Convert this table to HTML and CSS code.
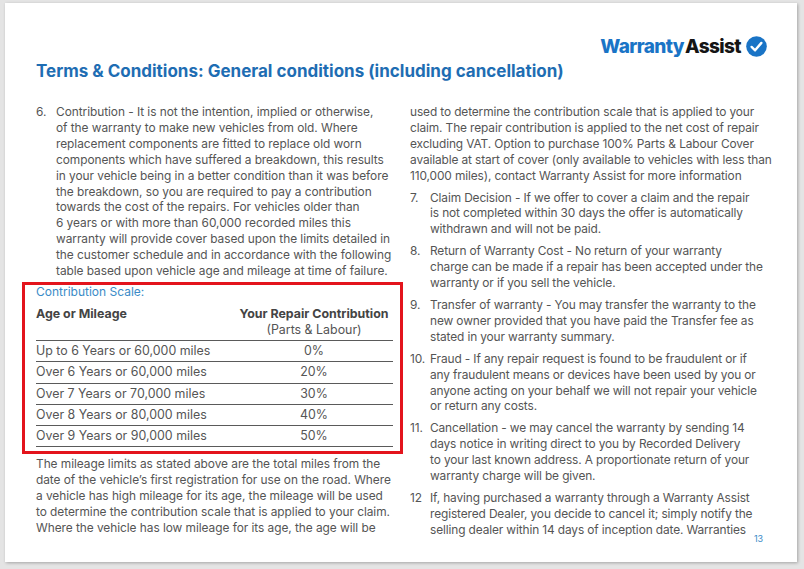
FILE: index.html
```html
<!DOCTYPE html>
<html lang="en">
<head>
<meta charset="utf-8">
<title>Terms &amp; Conditions</title>
<link rel="stylesheet" href="styles.css">
</head>
<body>
<div class="page">
  <header class="top">
    <div class="logo">
      <span class="logo-w">Warranty</span><span class="logo-a">Assist</span>
      <svg class="logo-check" width="21" height="21" viewBox="0 0 21 21" aria-hidden="true">
        <circle cx="10.5" cy="10.5" r="10.3" fill="#1a74c6"/>
        <path d="M5.6 10.9 L9.1 14.3 L15.4 6.9" fill="none" stroke="#fff" stroke-width="2.4" stroke-linecap="round" stroke-linejoin="round"/>
      </svg>
    </div>
  </header>
  <h1 class="title">Terms &amp; Conditions: General conditions (including cancellation)</h1>
  <div class="cols">
    <div class="col">
      <div class="item">
        <span class="num">6.</span>
        <span class="txt">Contribution - It is not the intention, implied or otherwise,<br>of the warranty to make new vehicles from old. Where<br>replacement components are fitted to replace old worn<br>components which have suffered a breakdown, this results<br>in your vehicle being in a better condition than it was before<br>the breakdown, so you are required to pay a contribution<br>towards the cost of the repairs. For vehicles older than<br>6 years or with more than 60,000 recorded miles this<br>warranty will provide cover based upon the limits detailed in<br>the customer schedule and in accordance with the following<br>table based upon vehicle age and mileage at time of failure.</span>
      </div>
      <div class="scale">
        <div class="scale-title">Contribution Scale:</div>
        <div class="scale-head">
          <span class="c1">Age or Mileage</span>
          <span class="c2"><b>Your Repair Contribution</b><br>(Parts &amp; Labour)</span>
        </div>
        <div class="scale-row"><span class="c1">Up to 6 Years or 60,000 miles</span><span class="c2">0%</span></div>
        <div class="scale-row"><span class="c1">Over 6 Years or 60,000 miles</span><span class="c2">20%</span></div>
        <div class="scale-row"><span class="c1">Over 7 Years or 70,000 miles</span><span class="c2">30%</span></div>
        <div class="scale-row"><span class="c1">Over 8 Years or 80,000 miles</span><span class="c2">40%</span></div>
        <div class="scale-row"><span class="c1">Over 9 Years or 90,000 miles</span><span class="c2">50%</span></div>
      </div>
      <p class="para">The mileage limits as stated above are the total miles from the<br>date of the vehicle’s first registration for use on the road. Where<br>a vehicle has high mileage for its age, the mileage will be used<br>to determine the contribution scale that is applied to your claim.<br>Where the vehicle has low mileage for its age, the age will be</p>
    </div>
    <div class="col col-right">
      <p class="para">used to determine the contribution scale that is applied to your<br>claim. The repair contribution is applied to the net cost of repair<br>excluding VAT. Option to purchase 100% Parts &amp; Labour Cover<br>available at start of cover (only available to vehicles with less than<br>110,000 miles), contact Warranty Assist for more information</p>
      <div class="item">
        <span class="num">7.</span>
        <span class="txt">Claim Decision - If we offer to cover a claim and the repair<br>is not completed within 30 days the offer is automatically<br>withdrawn and will not be paid.</span>
      </div>
      <div class="item">
        <span class="num">8.</span>
        <span class="txt">Return of Warranty Cost - No return of your warranty<br>charge can be made if a repair has been accepted under the<br>warranty or if you sell the vehicle.</span>
      </div>
      <div class="item">
        <span class="num">9.</span>
        <span class="txt">Transfer of warranty - You may transfer the warranty to the<br>new owner provided that you have paid the Transfer fee as<br>stated in your warranty summary.</span>
      </div>
      <div class="item">
        <span class="num">10.</span>
        <span class="txt">Fraud - If any repair request is found to be fraudulent or if<br>any fraudulent means or devices have been used by you or<br>anyone acting on your behalf we will not repair your vehicle<br>or return any costs.</span>
      </div>
      <div class="item">
        <span class="num">11.</span>
        <span class="txt">Cancellation - we may cancel the warranty by sending 14<br>days notice in writing direct to you by Recorded Delivery<br>to your last known address. A proportionate return of your<br>warranty charge will be given.</span>
      </div>
      <div class="item">
        <span class="num">12</span>
        <span class="txt">If, having purchased a warranty through a Warranty Assist<br>registered Dealer, you decide to cancel it; simply notify the<br>selling dealer within 14 days of inception date. Warranties</span>
      </div>
      <div class="folio">13</div>
    </div>
  </div>
</div>
</body>
</html>
```

FILE: styles.css
```css
html, body {
  margin: 0;
  padding: 0;
}
body {
  background: #e4e4e4;
  width: 804px;
  height: 569px;
  overflow: hidden;
  font-family: Inter, "Open Sans", sans-serif;
  color: #555555;
}
.page {
  width: 792px;
  height: 559px;
  margin: 3px 0 0 5px;
  background: #ffffff;
  box-shadow: 1px 1px 3px rgba(0, 0, 0, 0.28);
  box-sizing: border-box;
  padding: 0 30px 0 31px;
}
.top {
  display: flex;
  justify-content: flex-end;
  padding-top: 32px;
}
.logo {
  display: flex;
  align-items: center;
  height: 22px;
  font-family: Inter, sans-serif;
  font-weight: 800;
  font-size: 19px;
  letter-spacing: -0.6px;
}
.logo-w { color: #1a74c6; }
.logo-a { color: #151515; margin-left: 1px; }
.logo-check { margin-left: 5px; }
.title {
  margin: 4px 0 0;
  font-size: 17px;
  line-height: 20px;
  font-weight: 700;
  color: #1e6db3;
  letter-spacing: 0;
}
.cols {
  display: grid;
  grid-template-columns: 357px 357px;
  column-gap: 17px;
  margin-top: 23px;
  font-size: 11.9px;
  line-height: 15.9px;
  letter-spacing: -0.05px;
}
.col-right {
  letter-spacing: -0.12px;
}
.item {
  display: flex;
  margin-bottom: 6px;
}
.num {
  flex: 0 0 20px;
}
.txt {
  white-space: nowrap;
}
.para {
  margin: 0 0 6px;
  white-space: nowrap;
}
.scale {
  margin: -3px -10px 0 -14px;
  border: 3px solid #e3141c;
  padding: 0 7px 4px 11px;
  font-size: 12.4px;
  letter-spacing: 0;
}
.scale-title {
  color: #3a8bc7;
  font-size: 12px;
  line-height: 14px;
}
.scale-head {
  display: flex;
  padding: 7px 0 2px;
  border-bottom: 1px solid #5a5a5a;
  line-height: 16px;
}
.scale-head .c1 {
  font-weight: 700;
  color: #444;
}
.scale-head b {
  font-weight: 700;
  color: #444;
}
.scale-row {
  display: flex;
  line-height: 20.3px;
  border-bottom: 1px solid #5a5a5a;
}
.c1 {
  flex: 1 1 auto;
}
.c2 {
  flex: 0 0 158px;
  text-align: center;
}
.scale + .para {
  margin-top: 2px;
}
.folio {
  margin-top: -10px;
  padding-right: 4px;
  text-align: right;
  font-size: 9px;
  line-height: 10px;
  color: #3a8bc7;
}
```
